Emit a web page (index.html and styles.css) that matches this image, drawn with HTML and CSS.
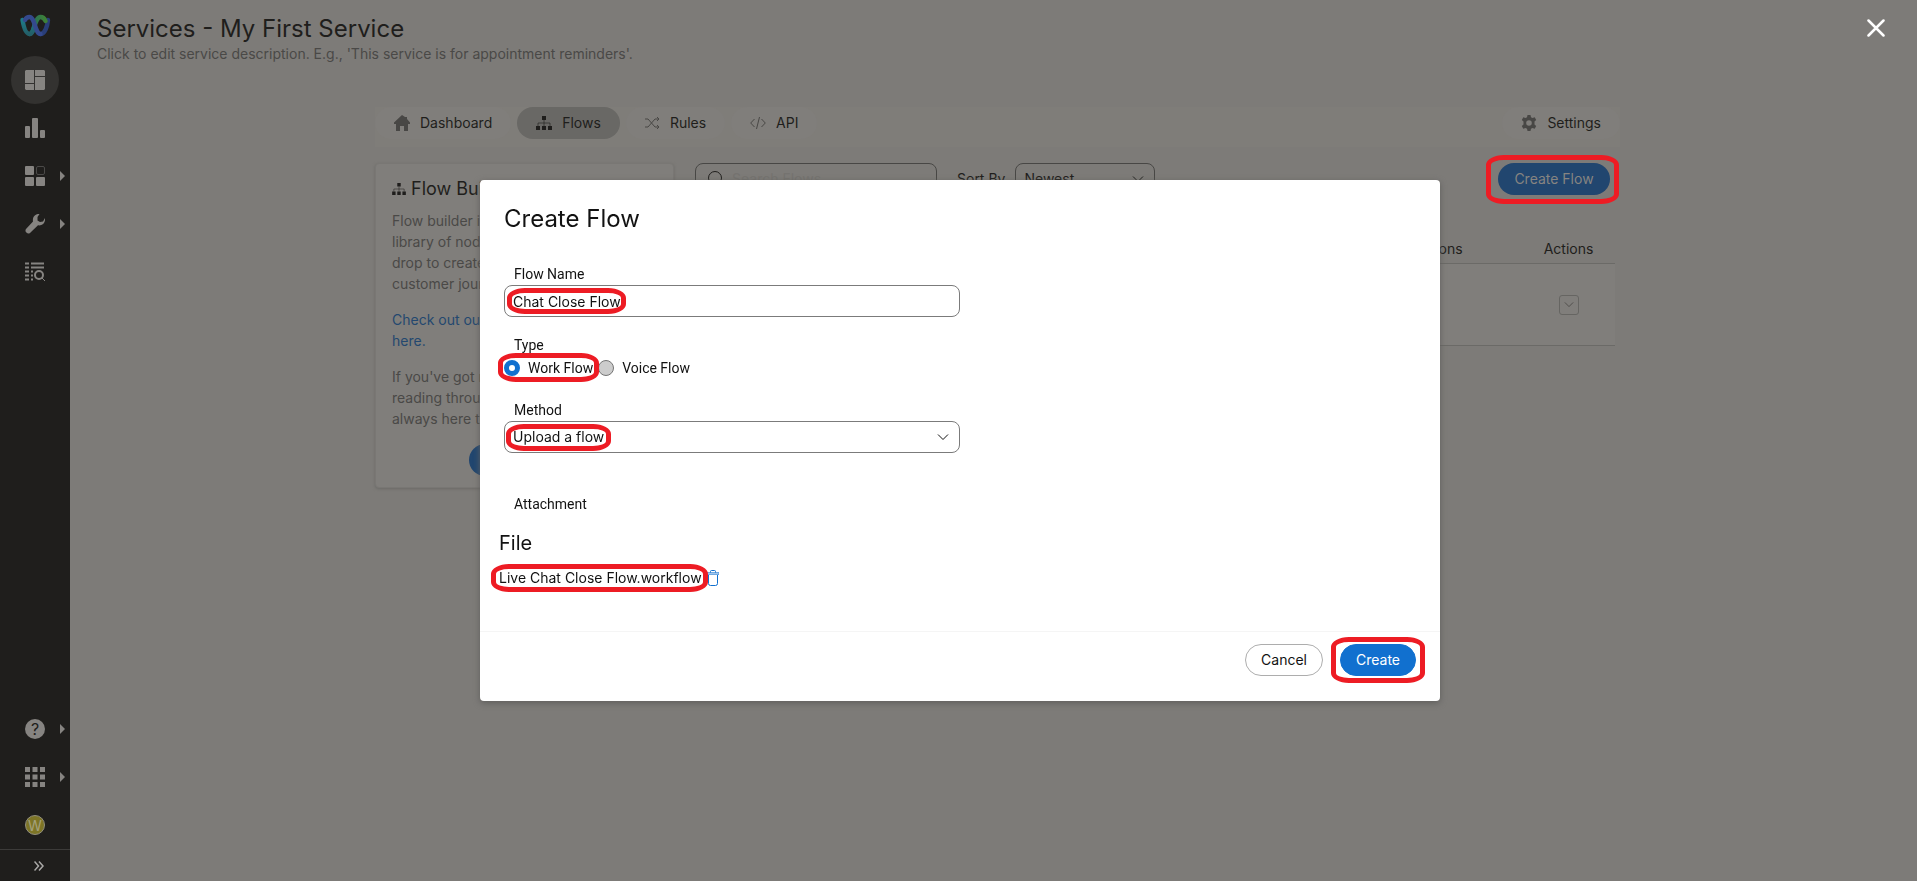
FILE: index.html
```html
<!DOCTYPE html>
<html lang="en">
<head>
<meta charset="utf-8">
<meta name="viewport" content="width=device-width, initial-scale=1">
<title>Services - My First Service</title>
<link rel="stylesheet" href="styles.css">
</head>
<body>
<svg class="defs" aria-hidden="true">
  <symbol id="tree" viewBox="0 0 16 14"><path d="M6 0h4v4H6zM0 10h4v4H0zM6 10h4v4H6zM12 10h4v4h-4z"/><path d="M8 4v6M2 10V7h12v3" fill="none" stroke="currentColor" stroke-opacity=".6"/></symbol>
  <symbol id="chev" viewBox="0 0 12 8"><path d="M1 1.500 6 6.500l5-5" fill="none" stroke="currentColor"/></symbol>
</svg>
<div class="app">
  <nav class="sidebar" aria-label="Main">
    <a class="side-item logo" href="#" aria-label="Home">
      <svg width="32" height="24" viewBox="0 0 32 24" fill="none" stroke-width="4.400" stroke-linecap="round">
        <defs>
          <linearGradient id="la" x1="0" y1="0" x2="0" y2="1"><stop stop-color="#1e7a88"/><stop offset="1" stop-color="#235f68"/></linearGradient>
          <linearGradient id="lb" x1="0" y1="0" x2="1" y2="0"><stop stop-color="#226c60"/><stop offset="1" stop-color="#3e8136"/></linearGradient>
        </defs>
        <path d="M29 6c-.6 6-3 14-7.500 14" stroke="#293e78"/>
        <path d="M10.500 20c5 0 5-17 11-17 2.500 0 4 1.500 5 4" stroke="url(#lb)"/>
        <path d="M3.500 6C5 15 7 20 10.500 20c3 0 4-5 5-9" stroke="url(#la)"/>
        <path d="M6 6c1-2 2.500-3 4.500-3 5.500 0 5.500 17 11 17" stroke="#34498d"/>
      </svg>
    </a>
    <a class="side-item" href="#" aria-label="Services"><span class="round"><svg width="20" height="20" viewBox="0 0 20 20"><path d="M1 0h8v13H0V1zM0 14h9v6H1l-1-1zM10 0h9l1 1v5H10zM10 7h10v12l-1 1h-9z"/></svg></span></a>
    <a class="side-item" href="#" aria-label="Reports"><svg width="20" height="20" viewBox="0 0 20 20"><rect y="8" width="5" height="12" rx="1"/><rect x="7" width="6" height="20" rx="1"/><rect x="15" y="12" width="5" height="8" rx="1"/></svg></a>
    <a class="side-item more" href="#" aria-label="Assets"><svg width="20" height="20" viewBox="0 0 20 20"><rect width="9" height="9" rx="1"/><rect y="11" width="9" height="9" rx="1"/><rect x="11" y="11" width="9" height="9" rx="1"/><rect x="11.500" y=".5" width="8" height="8" rx="1.500" fill="none" stroke="#4b4a48"/></svg></a>
    <a class="side-item more" href="#" aria-label="Tools"><svg width="20" height="20" viewBox="0 0 20 20"><path d="M14.500 0 12.500 3v3.500L15 8l3-.5 2-3.500c.6 4.500-2.500 8-7 7.300L5 19a2.900 2.900 0 0 1-4-4L8 7.500C7.200 3 10.500-.5 14.500 0z"/></svg></a>
    <a class="side-item" href="#" aria-label="Logs"><svg width="20" height="20" viewBox="0 0 20 20" fill="none" stroke="currentColor"><path d="M0 1.500h4M0 5.500h4M0 9.500h4M0 13.500h4M0 17.500h4M6 1.500h13M6 5.500h13M6 9.500h2M6 13.500h2M6 17.500h2" stroke-width="2"/><circle cx="14" cy="13" r="4" stroke-width="2"/><path d="m17 16 3 3"/></svg></a>
    <span class="spacer"></span>
    <a class="side-item more" href="#" aria-label="Help"><span class="help">?</span></a>
    <a class="side-item more" href="#" aria-label="Apps"><svg width="20" height="20" viewBox="0 0 20 20"><path d="M0 0h5v5H0zM7.500 0h5v5h-5zM15 0h5v5h-5zM0 7.500h5v5H0zM7.500 7.500h5v5h-5zM15 7.500h5v5h-5zM0 15h5v5H0zM7.500 15h5v5h-5zM15 15h5v5h-5z"/></svg></a>
    <a class="side-item" href="#" aria-label="Account"><span class="avatar">W</span></a>
    <button class="expand" type="button" aria-label="Expand"><svg width="10" height="10" viewBox="0 0 10 10" fill="none" stroke="currentColor" stroke-width="1.500"><path d="m.5.500 4 4.500-4 4.500M5 .5 9 5 5 9.500"/></svg></button>
  </nav>

  <main class="main">
    <header class="head">
      <h1>Services - My First Service</h1>
      <p>Click to edit service description. E.g., 'This service is for appointment reminders'.</p>
    </header>
    <div class="content">
      <nav class="tabs" aria-label="Service">
        <a class="tab" href="#"><svg width="16" height="16" viewBox="0 0 16 16"><path d="M8 0 0 7.500V9h2v7h4v-5h4v5h4V9h2V7.500L13 4V2h-2z"/></svg>Dashboard</a>
        <a class="tab active" href="#"><svg width="16" height="14"><use href="#tree"/></svg>Flows</a>
        <a class="tab" href="#"><svg width="15" height="12" viewBox="0 0 15 12" fill="none" stroke="currentColor"><path d="M0 2h3l7 8h4M0 10h3l7-8h4M12 0l2 2-2 2M12 8l2 2-2 2"/></svg>Rules</a>
        <a class="tab" href="#"><svg width="16" height="12" viewBox="0 0 16 12" fill="none" stroke="currentColor"><path d="M4.500 2 .7 6l3.800 4M11.500 2l3.800 4-3.800 4M9.500 0l-3 12"/></svg>API</a>
        <a class="tab settings" href="#"><svg width="16" height="16" viewBox="0 0 16 16"><path fill-rule="evenodd" d="M6.500 0h3l.5 2.200 1.500.9 2.200-.8 1.500 2.700L13.500 6.500v3l1.700 1.500-1.500 2.700-2.200-.8-1.500.9-.5 2.200h-3L6 13.800l-1.500-.9-2.200.8L.8 11l1.700-1.500v-3L.8 5l1.500-2.700 2.200.8L6 2.200zM8 5.200a2.800 2.800 0 1 0 0 5.600 2.800 2.800 0 0 0 0-5.600z"/></svg>Settings</a>
      </nav>
      <div class="columns">
        <aside class="card">
          <h2><svg width="14" height="12"><use href="#tree"/></svg>Flow Builder</h2>
          <p>Flow builder is<br>library of node<br>drop to create<br>customer jour</p>
          <p><a href="#">Check out our<br>here.</a></p>
          <p>If you've got m<br>reading throug<br>always here to</p>
          <button class="primary" type="button" aria-label="Contact us"></button>
        </aside>
        <section class="list">
          <div class="toolbar">
            <label class="search"><svg width="16" height="16" viewBox="0 0 16 16" fill="none" stroke="currentColor"><circle cx="7" cy="7" r="6.500"/><path d="m11.500 11.500 4 4"/></svg><input type="text" placeholder="Search Flows" aria-label="Search Flows"></label>
            <label for="sort">Sort By</label>
            <span class="select sort"><select id="sort"><option>Newest</option></select><svg width="12" height="8"><use href="#chev"/></svg></span>
            <span class="marked"><button class="primary" type="button">Create Flow</button><i class="ring ring-wide"></i></span>
          </div>
          <table>
            <thead><tr><th></th><th>Versions</th><th class="act">Actions</th></tr></thead>
            <tbody><tr><td></td><td></td><td class="act"><button class="drop" type="button" aria-label="Row actions"><svg width="10" height="7"><use href="#chev"/></svg></button></td></tr></tbody>
          </table>
        </section>
      </div>
    </div>
  </main>
</div>

<div class="overlay">
  <button class="close" type="button" aria-label="Close"><svg width="18" height="18" viewBox="0 0 18 18" fill="none" stroke="currentColor" stroke-width="2.500" stroke-linecap="round"><path d="m1.500 1.500 15 15M16.500 1.500l-15 15"/></svg></button>
  <form class="modal" role="dialog" aria-labelledby="dlg">
    <div class="body">
      <h2 id="dlg">Create Flow</h2>
      <div class="field">
        <label for="name">Flow Name</label>
        <div class="control"><input id="name" type="text" value="Chat Close Flow"><i class="ring ring-name"></i></div>
      </div>
      <fieldset class="field">
        <legend>Type</legend>
        <div class="radios">
          <label class="marked"><input type="radio" name="type" checked>Work Flow<i class="ring ring-radio"></i></label>
          <label><input type="radio" name="type">Voice Flow</label>
        </div>
      </fieldset>
      <div class="field">
        <label for="method">Method</label>
        <div class="control"><span class="select"><select id="method"><option>Upload a flow</option></select><svg width="12" height="8"><use href="#chev"/></svg></span><i class="ring ring-method"></i></div>
      </div>
      <div class="attach">
        <p class="caption">Attachment</p>
        <h3>File</h3>
        <div class="file"><span class="marked">Live Chat Close Flow.workflow<i class="ring ring-file"></i></span><button class="trash" type="button" aria-label="Delete file"><svg width="12" height="16" viewBox="0 0 12 16" fill="none" stroke="currentColor"><path d="M1.500 5v8.500a2 2 0 0 0 2 2h5a2 2 0 0 0 2-2V5"/><path d="M3.500 2.500v-1a1 1 0 0 1 1-1h3a1 1 0 0 1 1 1v1"/><path d="M0 2.500h12v2H0z" fill="currentColor" fill-opacity=".4" stroke-opacity=".5"/></svg></button></div>
      </div>
    </div>
    <footer class="foot">
      <button class="cancel" type="button">Cancel</button>
      <span class="marked"><button class="create" type="submit">Create</button><i class="ring ring-create"></i></span>
    </footer>
  </form>
</div>
</body>
</html>
```
FILE: styles.css
```css
* { box-sizing: border-box; }
body { margin: 0; background: #7d7b78; color: #1f1e1c; font: 14px/20px Inter, "Liberation Sans", sans-serif; overflow: hidden; }
h1, h2, h3, p { margin: 0; font-weight: 400; }
a { color: inherit; text-decoration: none; }
button, input, select { font: inherit; color: inherit; margin: 0; }
svg { display: block; flex: none; }
svg:not([fill]) { fill: currentColor; }
.defs { position: absolute; width: 0; height: 0; }

.app { display: flex; min-height: 100vh; }
.sidebar { display: flex; flex-direction: column; width: 70px; flex: none; background: #1f1e1c; color: #868481; }
.side-item { position: relative; display: flex; align-items: center; justify-content: center; height: 48px; }
.logo { height: 52px; margin-bottom: 4px; }
.round { display: flex; align-items: center; justify-content: center; width: 48px; height: 48px; border-radius: 50%; background: #333230; }
.more::after { content: ""; position: absolute; right: 5px; top: 19px; border: 5px solid transparent; border-left-color: #868481; border-right: 0; }
.spacer { flex: 1; }
.help { width: 20px; height: 20px; border-radius: 50%; background: #868481; color: #1f1e1c; text-align: center; font-size: 16px; }
.avatar { width: 20px; height: 20px; border: 1px solid #928f7e; border-radius: 50%; background: #7d7526; color: #a5a17c; text-align: center; line-height: 19px; }
.expand { display: flex; align-items: center; justify-content: center; height: 32px; padding: 0 0 0 8px; border: 0; border-top: 1px solid #3c3b39; background: none; color: #a9a8a6; }

.main { flex: 1; min-width: 0; padding: 14px 24px 0 27px; }
.head h1 { font-size: 24px; line-height: 30px; }
.head p { color: #4a4947; }
.content { max-width: 1240px; margin: 43px auto 0; }
.tabs { display: flex; gap: 6px; height: 40px; margin-right: -5px; background: #7f7d79; }
.tab { display: flex; align-items: center; gap: 10px; height: 32px; padding: 0 19px; border-radius: 16px; background: #807e7b; }
.tab svg { color: #484745; }
.tab.active { background: #696865; }
.tab.active svg { color: #1f1e1c; }
.settings { margin-left: auto; }
.columns { display: flex; gap: 21px; margin-top: 16px; }
.card { width: 299px; flex: none; height: 325px; padding: 16px; border: 1px solid #797774; border-radius: 4px; background: #807e7b; box-shadow: 0 1px 3px #6b6a67; color: #4a4947; line-height: 21px; }
.card h2 { display: flex; align-items: center; gap: 5px; margin-bottom: 12px; color: #1f1e1c; font-size: 18px; line-height: 18px; }
.card p { margin-bottom: 15px; white-space: nowrap; }
.card a { color: #24486f; }
.primary { height: 32px; min-width: 112px; padding: 0 12px; border: 0; border-radius: 16px; background: #21466f; color: #868481; }
.card .primary { display: block; margin: 0 auto; }
.list { flex: 1; min-width: 0; }
.toolbar { display: flex; align-items: center; padding-right: 5px; }
.toolbar > .marked { margin-left: auto; }
.search { display: flex; align-items: center; gap: 8px; width: 242px; height: 32px; margin-right: 20px; padding: 0 12px; border: 1px solid #484745; border-radius: 8px; }
.search input { width: 100%; border: 0; background: none; padding: 0; }
.search input::placeholder { color: #757370; opacity: 1; }
.select { position: relative; display: block; }
.select select { display: block; width: 100%; height: 32px; padding: 0 8px; border: 1px solid #7b7b7b; border-radius: 8px; appearance: none; background: none; }
.select svg { position: absolute; right: 11px; top: 12px; pointer-events: none; }
.sort { width: 140px; margin-left: 10px; }
.sort select { border-color: #484745; }
table { width: 100%; margin-top: 41px; border-collapse: collapse; }
th { height: 27px; padding: 0; font-weight: 400; text-align: center; }
th:nth-child(2), td:nth-child(2) { width: 176px; }
.act { width: 93px; padding: 0; text-align: center; }
td { height: 82px; padding: 0; background: #807e7b; border-top: 1px solid #6b6a67; border-bottom: 1px solid #6b6a67; }
.drop { display: inline-flex; align-items: center; justify-content: center; width: 20px; height: 20px; padding: 0; border: 1px solid #666562; border-radius: 3px; background: none; color: #484745; vertical-align: middle; }

.overlay { position: fixed; inset: 0; display: flex; justify-content: center; align-items: flex-start; padding: 180px 0 0 3px; color: #121212; }
.close { position: absolute; top: 19px; right: 32px; padding: 0; border: 0; background: none; color: #fff; }
.modal { width: 960px; border-radius: 4px; background: #fff; box-shadow: 0 2px 6px #5f5e5c; }
.body { padding: 25px 24px 24px; }
.body h2 { font-size: 24px; line-height: 28px; }
.field { width: 456px; margin: 30px 0 0; padding: 0; border: 0; }
.field > label, legend, .caption { display: block; padding: 0 0 0 10px; line-height: 22px; font-family: Roboto, sans-serif; }
fieldset.field { margin-top: 17px; }
.control { position: relative; }
.control input { display: block; width: 100%; height: 32px; padding: 0 8px; border: 1px solid #7b7b7b; border-radius: 8px; background: #fff; }
.radios { display: flex; gap: 5px; font-family: Roboto, sans-serif; line-height: 24px; }
.radios label { display: flex; align-items: center; gap: 8px; }
.radios input { appearance: none; width: 16px; height: 16px; border: 1px solid #757575; border-radius: 50%; background: #ccc; }
.radios input:checked { border: 5px solid #1170cf; background: #fff; }
fieldset + .field { margin-top: 19px; }
.attach { margin-left: -5px; padding-top: 40px; }
.caption { padding-left: 15px; }
h3 { margin-top: 16px; font-size: 20px; line-height: 24px; }
.file { display: flex; align-items: center; gap: 5px; margin-top: 13px; }
.trash { padding: 0; border: 0; background: none; color: #1170cf; }
.foot { display: flex; justify-content: flex-end; align-items: center; gap: 17px; margin-top: 19px; padding: 12px 24px 25px; border-top: 1px solid #f5f5f5; }
.foot button { display: block; height: 32px; padding: 0 15px; border: 1px solid #adadad; border-radius: 16px; background: #fff; }
.foot .create { border-color: #1170cf; background: #1170cf; color: #fff; }

/* highlight rings drawn over controls */
.marked { position: relative; }
.ring { position: absolute; border: 5px solid #ed1c24; border-radius: 18px / 10px; pointer-events: none; }
.ring-wide { inset: -8px -9px -9px -12px; }
.ring-create { inset: -7px -9px; }
.ring-name { left: 3px; top: 3px; width: 119px; height: 26px; }
.ring-radio { inset: -3px -6px -2px; }
.ring-method { left: 2px; top: 3px; width: 105px; height: 27px; }
.ring-file { inset: -4px -6px -4px -8px; }
```
